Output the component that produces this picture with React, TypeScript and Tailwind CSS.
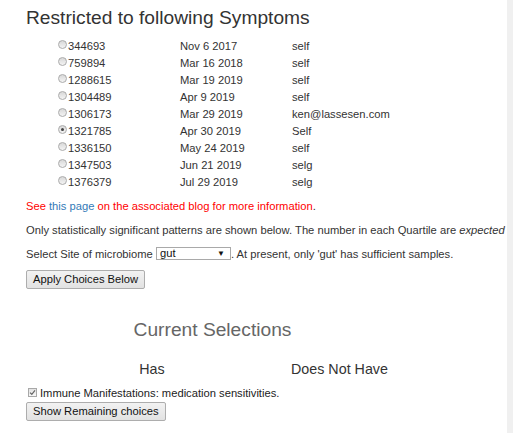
import React from "react";

const rows: { id: string; date: string; who: string; checked?: boolean }[] = [
  { id: "344693", date: "Nov 6 2017", who: "self" },
  { id: "759894", date: "Mar 16 2018", who: "self" },
  { id: "1288615", date: "Mar 19 2019", who: "self" },
  { id: "1304489", date: "Apr 9 2019", who: "self" },
  { id: "1306173", date: "Mar 29 2019", who: "ken@lassesen.com" },
  { id: "1321785", date: "Apr 30 2019", who: "Self", checked: true },
  { id: "1336150", date: "May 24 2019", who: "self" },
  { id: "1347503", date: "Jun 21 2019", who: "selg" },
  { id: "1376379", date: "Jul 29 2019", who: "selg" },
];

function Radio({ checked }: { checked?: boolean }) {
  return (
    <span className="mt-[2px] flex h-[9px] w-[9px] shrink-0 items-center justify-center rounded-full border border-[#ababab] bg-linear-to-b from-[#d8d8d8] to-[#f4f4f4]">
      {checked && <span className="h-[3px] w-[3px] rounded-full bg-[#444]" />}
    </span>
  );
}

function Button({ children }: { children: React.ReactNode }) {
  return (
    <button className="flex h-[19px] items-center rounded-[2px] border border-[#adadad] bg-linear-to-b from-[#f2f2f2] to-[#e2e2e2] px-[6px] text-[11.2px] leading-[17px] text-[#111]">
      {children}
    </button>
  );
}

export default function App() {
  return (
    <div className="flex min-h-[433px] w-full bg-white font-['Liberation_Sans',Arial,sans-serif] text-[#333]">
      <div className="min-w-0 flex-1 overflow-hidden pl-[26px]">
        <div className="mt-[7px] whitespace-nowrap text-[19.2px] leading-[22px] text-[#333]">
          Restricted to following Symptoms
        </div>

        <div className="mt-[9px] text-[11.2px] leading-[17px]">
          {rows.map((r) => (
            <div key={r.id} className="flex h-[17px] whitespace-nowrap">
              <div className="ml-[32px] flex w-[122px]">
                <Radio checked={r.checked} />
                <span className="ml-px">{r.id}</span>
              </div>
              <div className="w-[112px]">{r.date}</div>
              <div>{r.who}</div>
            </div>
          ))}
        </div>

        <div className="mt-[7px] whitespace-nowrap text-[11.2px] leading-[17px] text-[#ff0000]">
          See <span className="text-[#337ab7]">this page</span> on the associated blog for more information
          <span className="text-[#333]">.</span>
        </div>

        <div className="mt-[7px] whitespace-nowrap text-[11.2px] leading-[17px]">
          Only statistically significant patterns are shown below. The number in each Quartile are{" "}
          <i>expected</i>
        </div>

        <div className="mt-[7px] flex h-[17px] items-start whitespace-nowrap text-[11.2px] leading-[17px]">
          <span>Select Site of microbiome&nbsp;</span>
          <span className="mt-px flex h-[13px] w-[75px] items-center justify-between border border-[#a9a9a9] bg-white pl-[3px] pr-[5px] text-[11.2px] leading-[11px] text-[#111]">
            <span>gut</span>
            <span className="text-[8px] leading-[8px]">▼</span>
          </span>
          <span>. At present, only 'gut' has sufficient samples.</span>
        </div>

        <div className="mt-[7px] flex">
          <Button>Apply Choices Below</Button>
        </div>

        <div className="mt-[30px] w-[373px] text-center text-[19.2px] leading-[22px] text-[#666]">
          Current Selections
        </div>

        <div className="mt-[20px] flex text-[14.3px] leading-[17px] text-[#333]">
          <div className="w-[252px] text-center">Has</div>
          <div className="w-[123px] text-center">Does Not Have</div>
        </div>

        <div className="mt-[7px] flex h-[17px] items-start whitespace-nowrap text-[11.2px] leading-[17px] text-[#222]">
          <span className="ml-[2px] mt-[3px] flex h-[9px] w-[9px] shrink-0 items-center justify-center border border-[#a8a8a8] bg-linear-to-b from-[#e2e2e2] to-[#f8f8f8]">
            <svg width="7" height="7" viewBox="0 0 7 7">
              <path d="M1 3.6 L2.8 5.3 L6 1.4" fill="none" stroke="#666" strokeWidth="1.2" />
            </svg>
          </span>
          <span className="ml-[3px]">Immune Manifestations: medication sensitivities.</span>
        </div>

        <div className="flex">
          <Button>Show Remaining choices</Button>
        </div>
      </div>
      <div className="w-[6px] shrink-0 bg-[#f0f0f0]" />
    </div>
  );
}
